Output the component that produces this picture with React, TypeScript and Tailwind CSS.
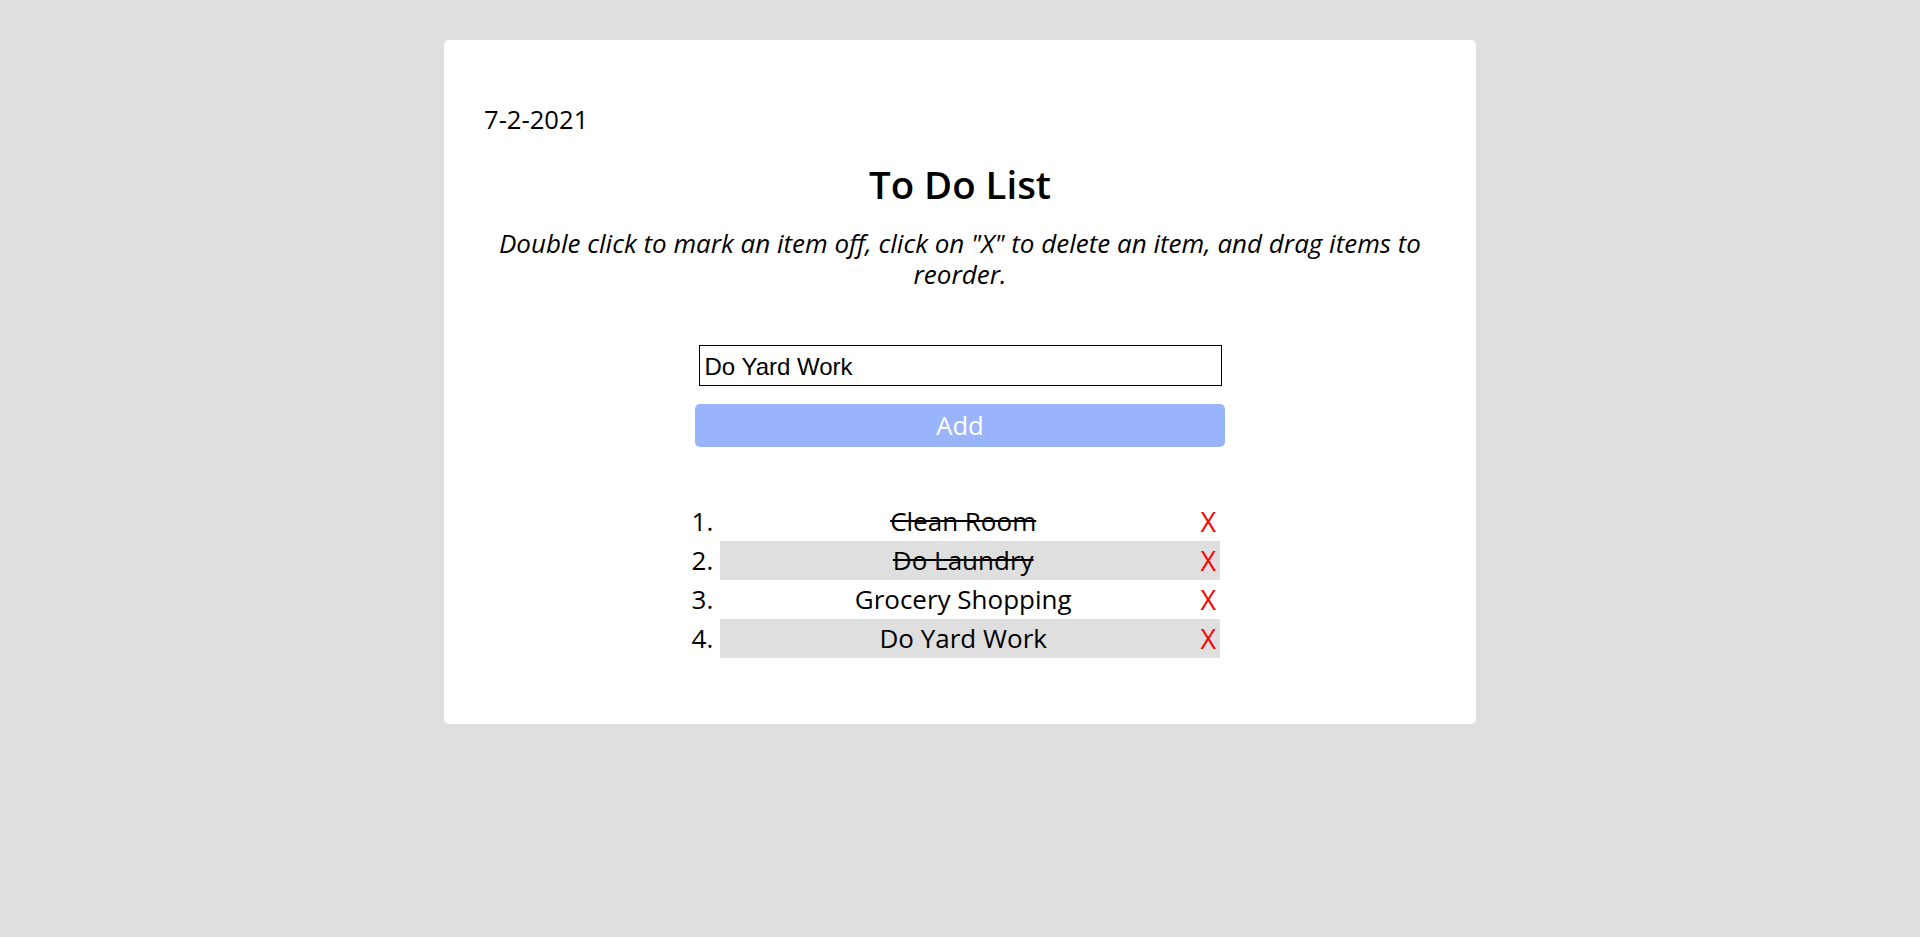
import { useState } from 'react';

interface Todo {
  id: number;
  text: string;
  done: boolean;
}

const initialTodos: Todo[] = [
  { id: 1, text: 'Clean Room', done: true },
  { id: 2, text: 'Do Laundry', done: true },
  { id: 3, text: 'Grocery Shopping', done: false },
  { id: 4, text: 'Do Yard Work', done: false },
];

export default function App() {
  const [todos, setTodos] = useState<Todo[]>(initialTodos);
  const [value, setValue] = useState('Do Yard Work');

  const toggle = (id: number) =>
    setTodos((list) => list.map((t) => (t.id === id ? { ...t, done: !t.done } : t)));

  const remove = (id: number) => setTodos((list) => list.filter((t) => t.id !== id));

  const add = () => {
    if (!value.trim()) return;
    setTodos((list) => [...list, { id: Date.now(), text: value.trim(), done: false }]);
  };

  return (
    <div className="min-h-screen bg-[#dfdfdf] pt-[40px] font-['Open_Sans',sans-serif] text-black">
      <div className="mx-auto w-[1032px] rounded-[5px] bg-white px-[40px] pt-[63px] pb-[66px]">
        {/* Date */}
        <p className="text-[25.6px] leading-[34px]">7-2-2021</p>

        {/* Heading */}
        <h1 className="mt-[21px] text-center text-[38.4px] leading-[52px] font-semibold">To Do List</h1>
        <p className="mt-[18px] text-center text-[26px] leading-[30.5px] italic">
          Double click to mark an item off, click on "X" to delete an item, and drag items to reorder.
        </p>

        {/* Form */}
        <div className="mt-[56px] flex flex-col items-center">
          <input
            type="text"
            value={value}
            onChange={(e) => setValue(e.target.value)}
            className="h-[41px] w-[523px] border border-black pt-[2px] pl-[5px] pr-[3px] font-['Liberation_Sans',Arial,sans-serif] text-[24px] text-black outline-none"
          />
          <button
            type="button"
            onClick={add}
            className="mt-[18px] h-[43px] w-[530px] rounded-[5px] bg-[#9ab4fc] text-[25.6px] leading-[43px] text-white"
          >
            Add
          </button>
        </div>

        {/* List */}
        <ol className="mx-auto mt-[55px] w-[520px] list-decimal pl-[20px] text-[26px] leading-[39px]">
          {todos.map((todo, i) => (
            <li
              key={todo.id}
              onDoubleClick={() => toggle(todo.id)}
              className={i % 2 === 1 ? 'bg-[#dfdfdf]' : ''}
            >
              <div className="flex items-center pl-[6px] pr-[4px]">
                <span className={`flex-1 text-center ${todo.done ? 'line-through' : ''}`}>{todo.text}</span>
                <button
                  type="button"
                  onClick={() => remove(todo.id)}
                  className="text-[27px] leading-[39px] text-[#ff0000]"
                >
                  X
                </button>
              </div>
            </li>
          ))}
        </ol>
      </div>
    </div>
  );
}
